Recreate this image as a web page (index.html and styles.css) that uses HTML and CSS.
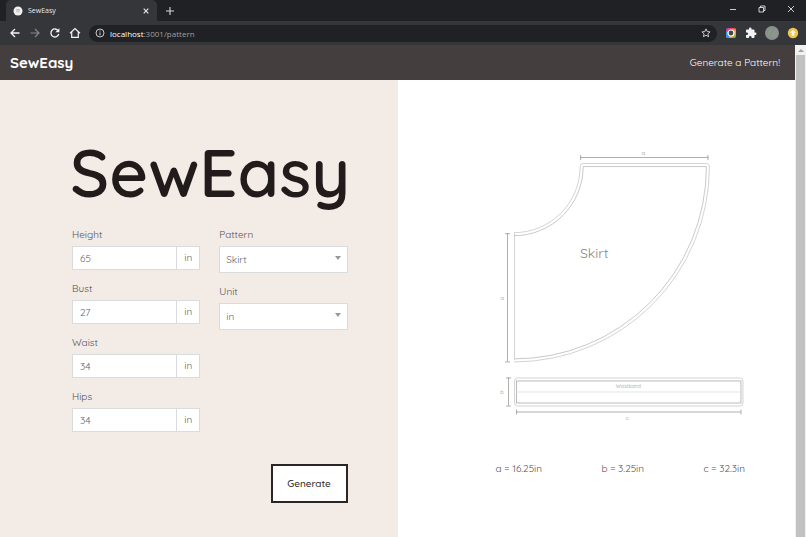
FILE: index.html
```html
<!DOCTYPE html>
<html lang="en">
<head>
  <meta charset="UTF-8" />
  <title>SewEasy</title>
  <meta name="viewport" content="width=device-width, initial-scale=1.0">
  <link rel="stylesheet" href="styles.css">
</head>
<body>
  <header class="browser">
    <div class="tabs">
      <div class="tab">
        <svg width="10" height="10" viewBox="0 0 10 10"><circle cx="5" cy="5" r="4.5" fill="#f1f1f1"/><path d="M3.4 3.5h3.2M3.7 3.5v2.6M6.3 3.5v2.6M5 3v4.2" stroke="#aaa" stroke-width=".6" fill="none"/></svg>
        <span class="tab-title">SewEasy</span>
        <button class="icon-btn" aria-label="Close tab"><svg width="8" height="8" viewBox="0 0 8 8"><path d="M1.7 1.7l4.6 4.6M6.3 1.7L1.7 6.3" stroke="#e8eaed" stroke-width="1.1"/></svg></button>
      </div>
      <button class="icon-btn new-tab" aria-label="New tab"><svg width="10" height="10" viewBox="0 0 10 10"><path d="M5 1v8M1 5h8" stroke="#d5d7da" stroke-width="1.1"/></svg></button>
      <div class="window-btns">
        <button class="icon-btn" aria-label="Minimize"><svg width="8" height="8" viewBox="0 0 8 8"><path d="M1 4.5h6" stroke="#e0e0e0" stroke-width=".9"/></svg></button>
        <button class="icon-btn" aria-label="Restore"><svg width="8" height="8" viewBox="0 0 8 8" fill="none" stroke="#e0e0e0" stroke-width=".9"><path d="M1 2.5h4.5V7H1zM2.5 2.5V1H7v4.5H5.5"/></svg></button>
        <button class="icon-btn" aria-label="Close"><svg width="8" height="8" viewBox="0 0 8 8"><path d="M1 1l6 6M7 1L1 7" stroke="#e0e0e0" stroke-width=".9"/></svg></button>
      </div>
    </div>
    <div class="toolbar">
      <button class="icon-btn" aria-label="Back"><svg width="12" height="12" viewBox="0 0 12 12" fill="none" stroke="#f1f3f4" stroke-width="1.3"><path d="M10.5 6H2M6 2L2 6l4 4"/></svg></button>
      <button class="icon-btn" aria-label="Forward"><svg width="12" height="12" viewBox="0 0 12 12" fill="none" stroke="#85878a" stroke-width="1.2"><path d="M1.5 6H10M6 2l4 4-4 4"/></svg></button>
      <button class="icon-btn" aria-label="Reload"><svg width="12" height="12" viewBox="0 0 12 12"><path d="M9.3 3.8A4 4 0 1 0 9.8 7" fill="none" stroke="#f1f3f4" stroke-width="1.3"/><path d="M10.4 1.2v4.1H6.3z" fill="#f1f3f4"/></svg></button>
      <button class="icon-btn" aria-label="Home"><svg width="12" height="12" viewBox="0 0 12 12" fill="none" stroke="#f1f3f4" stroke-width="1.2"><path d="M1 6.3L6 1.5l5 4.8M2.7 5v5.4h6.6V5"/></svg></button>
      <div class="address">
        <svg width="10" height="10" viewBox="0 0 10 10" fill="none" stroke="#dadce0" stroke-width=".9"><circle cx="5" cy="5" r="4"/><path d="M5 4.4v3M5 2.5v1"/></svg>
        <span class="url"><span class="host">localhost</span>:3001/pattern</span>
        <button class="icon-btn" aria-label="Bookmark"><svg width="10" height="10" viewBox="0 0 10 10"><path d="M5 .9l1.2 2.7 2.9.3L6.9 5.8l.7 2.9L5 7.2 2.4 8.7l.7-2.9L.9 3.9l2.9-.3z" fill="none" stroke="#dadce0" stroke-width=".9"/></svg></button>
      </div>
      <button class="icon-btn" aria-label="Camera extension"><svg width="12" height="12" viewBox="0 0 12 12">
        <defs><linearGradient id="rainbow" x1="0" y1="0" x2="1" y2="1"><stop offset="0" stop-color="#b03be0"/><stop offset=".3" stop-color="#f0446c"/><stop offset=".65" stop-color="#f3a43c"/><stop offset="1" stop-color="#45c264"/></linearGradient></defs>
        <rect x="1" y="1" width="10" height="10" rx="2" fill="url(#rainbow)"/><path d="M1 5h3v6H3a2 2 0 0 1-2-2z" fill="#2f9be8"/><circle cx="6" cy="6" r="3" fill="#45464a" stroke="#fff" stroke-width="1.2"/></svg></button>
      <button class="icon-btn" aria-label="Extensions"><svg width="12" height="12" viewBox="0 0 24 24"><path fill="#f1f3f4" d="M20.5 11H19V7a2 2 0 0 0-2-2h-4V3.500a2.500 2.500 0 0 0-5 0V5H4a2 2 0 0 0-2 2v3.800h1.500a2.700 2.700 0 0 1 0 5.400H2V20a2 2 0 0 0 2 2h3.800v-1.500a2.700 2.700 0 0 1 5.400 0V22H17a2 2 0 0 0 2-2v-4h1.500a2.500 2.500 0 0 0 0-5z"/></svg></button>
      <button class="icon-btn" aria-label="Profile"><svg width="14" height="14" viewBox="0 0 14 14"><circle cx="7" cy="7" r="7" fill="#88928b"/><path d="M3 9l3-6M6 11l5-7M9 11l3-4" stroke="#929c95" stroke-width="1.2"/></svg></button>
      <button class="icon-btn" aria-label="Update"><svg width="12" height="12" viewBox="0 0 12 12"><circle cx="6" cy="6" r="5.200" fill="#f3c34d"/><path d="M6 2.700l3 3H7.300v3H4.700v-3H3z" fill="#fffbe9"/></svg></button>
    </div>
  </header>

  <div class="viewport">
    <div class="page">
      <nav class="navbar">
        <a class="brand" href="#">SewEasy</a>
        <a class="nav-link" href="#">Generate a Pattern!</a>
      </nav>
      <main class="content">
        <section class="form-panel">
          <h1>SewEasy</h1>
          <form>
            <div class="columns">
              <div>
                <div class="field">
                  <label for="height">Height</label>
                  <div class="input-group"><input id="height" type="text" value="65"><span class="unit">in</span></div>
                </div>
                <div class="field">
                  <label for="bust">Bust</label>
                  <div class="input-group"><input id="bust" type="text" value="27"><span class="unit">in</span></div>
                </div>
                <div class="field">
                  <label for="waist">Waist</label>
                  <div class="input-group"><input id="waist" type="text" value="34"><span class="unit">in</span></div>
                </div>
                <div class="field">
                  <label for="hips">Hips</label>
                  <div class="input-group"><input id="hips" type="text" value="34"><span class="unit">in</span></div>
                </div>
              </div>
              <div>
                <div class="field">
                  <label for="pattern">Pattern</label>
                  <div class="select-box"><select id="pattern"><option>Skirt</option></select></div>
                </div>
                <div class="field">
                  <label for="unit">Unit</label>
                  <div class="select-box"><select id="unit"><option>in</option><option>cm</option></select></div>
                </div>
              </div>
            </div>
            <button type="button" class="generate">Generate</button>
          </form>
        </section>

        <section class="pattern-panel">
          <svg class="drawing" viewBox="496 146 249 276" role="img" aria-label="Skirt pattern">
            <!-- skirt: seam line and cut line -->
            <g fill="none" stroke="#c8c8c8" stroke-width=".8">
              <path d="M514 232.500A66 66 0 0 0 580 166.500Q580 163.500 583 163.500H706Q709 163.500 709 166.500A195 195 0 0 1 514 361.500"/>
              <path d="M514.500 233V359"/>
              <path d="M514 235.500A69 69 0 0 0 583 166.500H706A192 192 0 0 1 514 358.500" stroke="#bbb"/>
              <rect x="514.500" y="377.500" width="228" height="28" rx="3"/>
              <rect x="516.500" y="380.500" width="224" height="22" stroke="#aaa"/>
              <path d="M516 391.500H741" stroke="#ddd"/>
            </g>
            <!-- dimension lines -->
            <g fill="none" stroke="#999" stroke-width=".8">
              <path d="M580 157.500H708M580.500 155v5M707.500 155v5"/>
              <path d="M507.500 233V361M505 233.500h5M505 361.500h5"/>
              <path d="M508.500 377V405M506 377.500h5M506 405.500h5"/>
              <path d="M516 411.500H740M516.500 409v5M740.500 409v5"/>
            </g>
            <text class="piece-name" x="594" y="258">Skirt</text>
            <text class="dim" x="643" y="155">a</text>
            <text class="dim" x="502" y="300">a</text>
            <text class="dim" x="502" y="394">b</text>
            <text class="dim" x="627" y="419">c</text>
            <text class="dim small" x="628" y="388">Waistband</text>
          </svg>
          <div class="measurements">
            <span>a = 16.25in</span>
            <span>b = 3.25in</span>
            <span>c = 32.3in</span>
          </div>
        </section>
      </main>
    </div>
    <div class="scrollbar"><span class="scroll-up"></span><span class="thumb"></span></div>
  </div>
</body>
</html>
```
FILE: styles.css
```css
* {
  box-sizing: border-box;
}
body {
  margin: 0;
  min-height: 100vh;
  display: flex;
  flex-direction: column;
  font-family: Quicksand, Lato, sans-serif;
  font-size: 10px;
  color: #555;
}
svg {
  display: block;
}
a {
  text-decoration: none;
}
.icon-btn {
  padding: 0;
  border: none;
  background: none;
}

/* browser bar */
.browser {
  background: #35363a;
  font-family: "Open Sans", sans-serif;
}
.tabs {
  height: 21px;
  display: flex;
  align-items: center;
  background: #202124;
  padding-left: 6px;
}
.tab {
  width: 151px;
  height: 21px;
  display: flex;
  align-items: center;
  gap: 5px;
  padding: 0 7px;
  background: #35363a;
  border-radius: 5px 5px 0 0;
}
.tab-title {
  flex: 1;
  font-size: 7px;
  color: #e8eaed;
}
.new-tab {
  margin-left: 8px;
}
.window-btns {
  display: flex;
  gap: 21px;
  margin-left: auto;
  padding: 0 11px 3px 0;
}
.toolbar {
  height: 24px;
  display: flex;
  align-items: center;
  gap: 8px;
  padding: 0 7px 0 9px;
}
.address {
  flex: 1;
  height: 17px;
  display: flex;
  align-items: center;
  gap: 5px;
  padding: 0 6px;
  border-radius: 9px;
  background: #202124;
}
.url {
  flex: 1;
  font-size: 8px;
  color: #9aa0a6;
}
.host {
  color: #fff;
}

/* page */
.viewport {
  flex: 1;
  display: flex;
}
.page {
  flex: 1;
  display: flex;
  flex-direction: column;
}
.navbar {
  height: 35px;
  display: flex;
  align-items: center;
  justify-content: space-between;
  padding: 0 15px 0 10px;
  background: #443f3e;
}
.brand {
  font-size: 15px;
  font-weight: bold;
  color: #fff;
}
.nav-link {
  color: #fff;
}
.content {
  flex: 1;
  display: grid;
  grid-template-columns: minmax(0, 1fr) minmax(0, 1fr);
}
.form-panel {
  padding: 50px 50px 34px 70px;
  background: #f2ebe6;
}
form {
  padding-left: 2px;
}
h1 {
  margin: 0 0 12px;
  font-size: 67px;
  font-weight: 600;
  line-height: 84px;
  color: #211c1b;
}
.columns {
  display: grid;
  grid-template-columns: 1fr 1fr;
  gap: 19px;
}
.field {
  margin-bottom: 10px;
}
label {
  display: block;
  line-height: 18px;
  margin-bottom: 2px;
}
.input-group {
  height: 24px;
  display: flex;
  border: 1px solid #d9dcdd;
  background: #fff;
}
input, select {
  min-width: 0;
  width: 100%;
  border: none;
  background: #fff;
  font-family: inherit;
  font-size: 10px;
  color: #666;
}
input {
  flex: 1;
  padding: 0 7px;
}
.unit {
  width: 23px;
  line-height: 22px;
  text-align: center;
  border-left: 1px solid #d9dcdd;
  color: #666;
}
.select-box {
  position: relative;
}
.select-box::after {
  content: "";
  position: absolute;
  right: 7px;
  top: 10px;
  border: 3px solid transparent;
  border-top: 4px solid #999;
  border-bottom: 0;
  pointer-events: none;
}
select {
  display: block;
  height: 27px;
  padding: 0 6px;
  border: 1px solid #d9dcdd;
  border-radius: 0;
  appearance: none;
}
.generate {
  display: block;
  width: 77px;
  height: 39px;
  margin: 22px 0 0 auto;
  padding: 0;
  border: 2px solid #2b2523;
  background: #fff;
  font-family: inherit;
  font-size: 10px;
  font-weight: 500;
  color: #222;
}
.pattern-panel {
  padding: 66px 50px 34px 98px;
  background: #fff;
}
.drawing {
  width: 100%;
}
.drawing text {
  text-anchor: middle;
}
.drawing .piece-name {
  font-size: 14px;
  fill: #888;
}
.drawing .dim {
  font-size: 6px;
  fill: #999;
}
.drawing .small {
  font-size: 5px;
}
.measurements {
  display: flex;
  justify-content: space-between;
  margin-top: 38px;
  line-height: 16px;
}

/* scrollbar */
.scrollbar {
  width: 11px;
  display: flex;
  flex-direction: column;
  align-items: center;
  background: #f1f1f1;
}
.scroll-up {
  margin: 4px 0 3px;
  border: 3px solid transparent;
  border-top: 0;
  border-bottom: 3px solid #a3a3a3;
}
.thumb {
  flex: 1;
  width: 9px;
  background: #c1c1c1;
}
```
